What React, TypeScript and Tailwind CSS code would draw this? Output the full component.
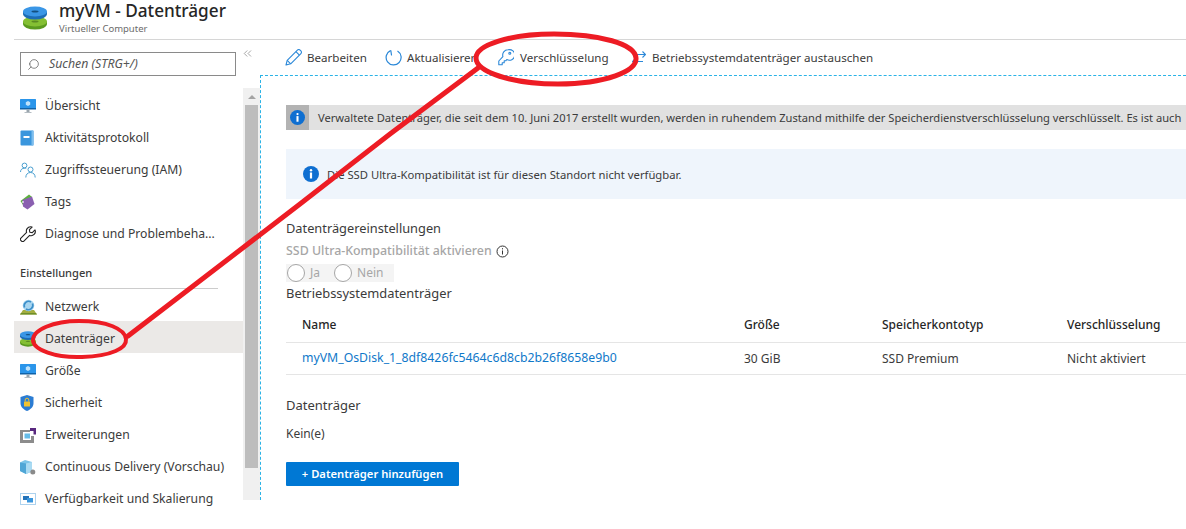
import { ReactNode } from 'react';
import { ChevronsLeft, Search } from 'lucide-react';

function DiskIcon({ size = 24 }: { size?: number }) {
  return (
    <svg width={size} height={size} viewBox="0 0 24 24">
      <ellipse cx="12" cy="18" rx="12" ry="5.500" fill="#5b9a1f" />
      <rect x="0" y="15.500" width="24" height="2.500" fill="#5b9a1f" />
      <ellipse cx="12" cy="15.500" rx="12" ry="5" fill="#84bf33" />
      <ellipse cx="12" cy="15.500" rx="3.500" ry="1" fill="#5b8a22" />
      <ellipse cx="12" cy="8" rx="12" ry="5.500" fill="#1c6cb5" />
      <rect x="0" y="5.500" width="24" height="2.500" fill="#1c6cb5" />
      <ellipse cx="12" cy="5.500" rx="12" ry="5" fill="#3a96e6" />
      <ellipse cx="12" cy="5.500" rx="3.500" ry="1" fill="#134f80" />
    </svg>
  );
}

function MonitorIcon() {
  return (
    <svg width="16" height="16" viewBox="0 0 16 16">
      <rect x="0" y="1" width="16" height="10" rx="0.500" fill="#2a95ea" />
      <rect x="0" y="10" width="16" height="1.500" fill="#1163a8" />
      <path d="M8 3l2.200 1.300v2.400L8 8 5.800 6.700V4.300z" fill="#bfe3fb" />
      <rect x="6.500" y="11.500" width="3" height="2.500" fill="#9aa5ad" />
      <rect x="4.500" y="14" width="7" height="1" fill="#b5bdc3" />
    </svg>
  );
}

function LogIcon() {
  return (
    <svg width="14" height="16" viewBox="0 0 14 16">
      <rect x="0.500" y="0.500" width="13" height="15" rx="1" fill="#3a96dd" />
      <rect x="11.500" y="0.500" width="2" height="15" fill="#7dbdee" />
      <rect x="3.500" y="6" width="6" height="2" fill="#ffffff" />
    </svg>
  );
}

function PeopleIcon() {
  return (
    <svg width="16" height="16" viewBox="0 0 16 16" fill="none" stroke="#4a9fd0" strokeWidth="1">
      <circle cx="4.500" cy="3.500" r="2.400" />
      <path d="M0.500 10c0-2.400 1.600-3.800 4-3.800 0.700 0 1.200 0.100 1.700 0.300" />
      <circle cx="10.500" cy="7.500" r="2.500" />
      <path d="M5.800 15.500c0-3 1.800-5 4.700-5s4.700 2 4.700 5" />
    </svg>
  );
}

function TagIcon() {
  return (
    <svg width="15" height="16" viewBox="0 0 15 16">
      <path d="M0.500 7L9 0.500 12 3 3 11z" fill="#5db03f" />
      <path d="M2.500 6L12 2.500 14.500 10 7.500 15.500 3 12.500z" fill="#8a5fb0" />
      <circle cx="3" cy="8" r="1" fill="#e6ddef" />
    </svg>
  );
}

function WrenchIcon() {
  return (
    <svg width="16" height="16" viewBox="0 0 16 16" fill="none" stroke="#222222" strokeWidth="1.100" strokeLinejoin="round">
      <path d="M10.500 0.800a4.200 4.200 0 00-3.900 5.600L0.900 12.100a1.700 1.700 0 000 2.400l0.600 0.600a1.700 1.700 0 002.400 0l5.700-5.700a4.200 4.200 0 005.400-5.500L12.300 6.600 9.800 6.200 9.400 3.700 12.100 1.100a4.200 4.200 0 00-1.600-0.300z" />
    </svg>
  );
}

function NetworkIcon() {
  return (
    <svg width="17" height="16" viewBox="0 0 17 16">
      <path d="M0 15.500L3 11h11l3 4.500z" fill="#a3ad3f" />
      <path d="M0 15.500L1 14h15l1 1.500z" fill="#6f8f2a" />
      <circle cx="8.500" cy="6.500" r="5.800" fill="#a9d6f0" />
      <path d="M4.500 8.500a4.500 4.500 0 016.500-5.500M12.500 4.500a4.500 4.500 0 01-6.500 5.500" fill="none" stroke="#3d8fc9" strokeWidth="1.600" />
    </svg>
  );
}

function ShieldIcon() {
  return (
    <svg width="14" height="16" viewBox="0 0 14 16">
      <path d="M7 0l6.500 2v6c0 4-3 6.500-6.500 8C3.500 14.500 0.500 12 0.500 8V2z" fill="#2b7cd3" />
      <rect x="4" y="6.500" width="6" height="5" rx="0.500" fill="#f2c230" />
      <path d="M5.200 6.500V5a1.800 1.800 0 013.600 0v1.500" fill="none" stroke="#f2c230" strokeWidth="1" />
    </svg>
  );
}

function ExtensionIcon() {
  return (
    <svg width="16" height="15" viewBox="0 0 16 15">
      <path d="M0 2h10v2H3v8h8V8h3v7H0z" fill="#8c8c8c" />
      <rect x="4.500" y="5.500" width="5.500" height="5" fill="#66bce8" />
      <path d="M10 0h6v6.500h-2.500V3H10z" fill="#59287f" />
    </svg>
  );
}

function DeliveryIcon() {
  return (
    <svg width="16" height="16" viewBox="0 0 16 16">
      <path d="M0 3.500L5 1l7 2v9.500L6 15 0 12z" fill="#7cc4e8" />
      <path d="M6 4.500L12 3v9.500L6 15z" fill="#a9daf2" />
      <path d="M0 3.500L6 4.500V15L0 12z" fill="#4fa6d6" />
      <circle cx="12.800" cy="13" r="2.500" fill="#8a8a8a" />
    </svg>
  );
}

function ScaleIcon() {
  return (
    <svg width="16" height="12" viewBox="0 0 16 12">
      <rect x="0.500" y="0.500" width="15" height="11" fill="#ffffff" stroke="#5aa5dc" strokeDasharray="1 1" />
      <rect x="3" y="3" width="6" height="4" fill="#2272b9" />
      <rect x="7" y="5" width="6" height="4.500" fill="#3a96dd" />
    </svg>
  );
}

function PencilIcon() {
  return (
    <svg width="17" height="17" viewBox="0 0 17 17" fill="none" stroke="#2b88d8" strokeWidth="1.100" strokeLinejoin="round">
      <path d="M1 16l1.200-4.700L12.400 1.100a1.900 1.900 0 012.700 0l0.800 0.800a1.900 1.900 0 010 2.700L5.700 14.800z" />
      <path d="M2.200 11.300l3.500 3.500M10.900 2.600l3.500 3.500" />
    </svg>
  );
}

function RefreshIcon() {
  return (
    <svg width="17" height="17" viewBox="0 0 17 17" fill="none" stroke="#2b88d8" strokeWidth="1.200">
      <path d="M5.500 1.600a7.500 7.500 0 107 0.400" />
      <path d="M5.800 1.500L6.500 6M9.500 0.500" strokeLinecap="round" />
    </svg>
  );
}

function KeyIcon() {
  return (
    <svg width="16" height="17" viewBox="0 0 16 17" fill="none" stroke="#2b88d8" strokeWidth="1.100" strokeLinejoin="round">
      <path d="M10 0.800a5.300 5.300 0 00-5.100 6.800L0.800 12v3.800h3.400v-2h2v-2h1.600l1-1.300A5.300 5.300 0 1010 0.800z" />
      <circle cx="11.800" cy="4.300" r="1" />
    </svg>
  );
}

function SwapIcon() {
  return (
    <svg width="14" height="14" viewBox="0 0 14 14" fill="none" stroke="#2b88d8" strokeWidth="1.100">
      <path d="M3 3.500h10.500M10.500 0.500l3 3-3 3" />
      <path d="M11 10.500H0.500M3.500 7.500l-3 3 3 3" />
    </svg>
  );
}

function NavItem({ icon, label, active }: { icon: ReactNode; label: string; active?: boolean }) {
  return (
    <div className={`flex h-8 items-center pl-[6px] pt-[4px] ${active ? 'bg-[#ebe9e7]' : ''}`}>
      <div className="flex w-[25px] shrink-0 justify-start">{icon}</div>
      <span className="whitespace-nowrap">{label}</span>
    </div>
  );
}

function ToolButton({ icon, label, gap, className }: { icon: ReactNode; label: string; gap: string; className: string }) {
  return (
    <div className={`flex items-center whitespace-nowrap ${gap} ${className}`}>
      {icon}
      <span>{label}</span>
    </div>
  );
}

function InfoDot({ size }: { size: string }) {
  return (
    <svg className={size} viewBox="0 0 16 16">
      <circle cx="8" cy="8" r="8" fill="#0f6fd1" />
      <circle cx="8" cy="4.300" r="1.200" fill="#ffffff" />
      <rect x="6.900" y="6.500" width="2.200" height="6" fill="#ffffff" />
    </svg>
  );
}

function SmallInfo() {
  return (
    <svg width="13" height="13" viewBox="0 0 13 13" fill="none" stroke="#333333" strokeWidth="1">
      <circle cx="6.500" cy="6.500" r="5.500" />
      <path d="M6.500 5.500v4M6.500 3.200v1.200" />
    </svg>
  );
}

function Radio({ label }: { label: string }) {
  return (
    <div className="flex items-center gap-[5px] text-[#a6a6a6]">
      <div className="h-[18px] w-[18px] rounded-full border border-[#a6a6a6] bg-white" />
      <span>{label}</span>
    </div>
  );
}

export default function App() {
  return (
    <div className="relative h-[529px] w-[1186px] overflow-hidden bg-white font-['Noto_Sans',sans-serif] text-[12px] text-[#3b3b3b]">
      <header className="ml-[14px] flex h-[40px] items-start border-b border-[#d6d6d6]">
        <div className="ml-[9px] mt-[6px]">
          <DiskIcon size={24} />
        </div>
        <div className="ml-[12px]">
          <h1 className="text-[17.200px] leading-[22px] font-medium text-[#262626]">myVM - Datenträger</h1>
          <p className="text-[9.500px] leading-[13px] text-[#6b6b6b]">Virtueller Computer</p>
        </div>
      </header>

      <div className="flex h-[460px]">
        <aside className="relative w-[243px] shrink-0 pl-[14px] text-[12.200px]">
          <div className="ml-[6px] mt-[12px] flex h-[24px] w-[216px] items-center border border-[#8a8a8a] pl-[6px] italic text-[#555555]">
            <Search size={13} strokeWidth={1.300} className="-scale-x-100" />
            <span className="ml-[9px] text-[12.300px]">Suchen (STRG+/)</span>
          </div>
          <ChevronsLeft size={13} strokeWidth={1.200} className="absolute left-[241px] top-[7px] text-[#777777]" />

          <nav className="mt-[12px]">
            <NavItem icon={<MonitorIcon />} label="Übersicht" />
            <NavItem icon={<LogIcon />} label="Aktivitätsprotokoll" />
            <NavItem icon={<PeopleIcon />} label="Zugriffssteuerung (IAM)" />
            <NavItem icon={<TagIcon />} label="Tags" />
            <NavItem icon={<WrenchIcon />} label="Diagnose und Problembeha..." />
            <div className="ml-[6px] mr-[25px] mt-[16px] border-b border-[#cccccc] pb-[6px] text-[11.100px] leading-[18px] font-medium">
              Einstellungen
            </div>
            <NavItem icon={<NetworkIcon />} label="Netzwerk" />
            <NavItem active icon={<DiskIcon size={16} />} label="Datenträger" />
            <NavItem icon={<MonitorIcon />} label="Größe" />
            <NavItem icon={<ShieldIcon />} label="Sicherheit" />
            <NavItem icon={<ExtensionIcon />} label="Erweiterungen" />
            <NavItem icon={<DeliveryIcon />} label="Continuous Delivery (Vorschau)" />
            <NavItem icon={<ScaleIcon />} label="Verfügbarkeit und Skalierung" />
          </nav>
        </aside>

        <div className="mt-[48px] flex h-[412px] w-[17px] shrink-0 flex-col bg-[#f0f0f0] px-[2px]">
          <div className="flex h-[17px] items-center justify-center">
            <div className="h-0 w-0 border-x-[4px] border-b-[4px] border-x-transparent border-b-[#a3a3a3]" />
          </div>
          <div className="h-[363px] bg-[#bdbdbd]" />
        </div>

        <main className="min-w-0 flex-1">
          <div className="flex h-[35px] items-center pt-[1px] text-[11.600px]">
            <ToolButton className="ml-[25px] w-[100px]" gap="gap-[5px]" icon={<PencilIcon />} label="Bearbeiten" />
            <ToolButton className="w-[113px]" gap="gap-[5px]" icon={<RefreshIcon />} label="Aktualisieren" />
            <ToolButton className="w-[134px]" gap="gap-[6px]" icon={<KeyIcon />} label="Verschlüsselung" />
            <ToolButton className="" gap="gap-[6px]" icon={<SwapIcon />} label="Betriebssystemdatenträger austauschen" />
          </div>

          <div className="h-[425px] border-l border-t border-dashed border-[#2bb3e6] pl-[25px] pt-[29px]">
            <div className="flex h-[25px] items-center whitespace-nowrap bg-[#e1e1e1] text-[11.150px]">
              <div className="flex h-full w-[23px] shrink-0 items-center justify-center bg-[#b3b3b3]">
                <InfoDot size="h-[15px] w-[15px]" />
              </div>
              <span className="ml-[9px] mt-[2px]">
                Verwaltete Datenträger, die seit dem 10. Juni 2017 erstellt wurden, werden in ruhendem Zustand mithilfe der Speicherdienstverschlüsselung verschlüsselt. Es ist auch
              </span>
            </div>

            <div className="mt-[19px] flex h-[50px] items-center bg-[#eff5fc] pl-[17px] text-[11.280px]">
              <InfoDot size="h-[16px] w-[16px]" />
              <span className="ml-[8px] mt-[2px]">Die SSD Ultra-Kompatibilität ist für diesen Standort nicht verfügbar.</span>
            </div>

            <h2 className="mt-[20px] text-[12.800px] leading-[18px]">Datenträgereinstellungen</h2>
            <div className="mt-[5px] flex items-center gap-[4px] text-[12.400px] font-medium leading-[18px] text-[#a6a6a6]">
              SSD Ultra-Kompatibilität aktivieren
              <SmallInfo />
            </div>
            <div className="mt-[4px] flex h-[18px] w-[108px] items-center gap-[14px] bg-[#f4f4f4] pl-[1px]">
              <Radio label="Ja" />
              <Radio label="Nein" />
            </div>
            <h2 className="mt-[2px] text-[12.900px] leading-[18px]">Betriebssystemdatenträger</h2>

            <div className="mt-[6px] grid h-[35px] grid-cols-[442px_138px_185px_1fr] items-center border-b border-[#e5e5e5] pl-[16px] font-medium text-[#262626]">
              <span>Name</span>
              <span>Größe</span>
              <span>Speicherkontotyp</span>
              <span>Verschlüsselung</span>
            </div>
            <div className="grid h-[32px] grid-cols-[442px_138px_185px_1fr] items-center border-b border-[#e5e5e5] pl-[16px]">
              <span className="text-[12.270px] text-[#0f78c9]">myVM_OsDisk_1_8df8426fc5464c6d8cb2b26f8658e9b0</span>
              <span>30 GiB</span>
              <span>SSD Premium</span>
              <span>Nicht aktiviert</span>
            </div>

            <h2 className="mt-[21px] text-[13px] leading-[18px]">Datenträger</h2>
            <p className="mt-[11px] leading-[18px]">Kein(e)</p>
            <button className="mt-[19px] h-[24px] w-[173px] rounded-[1px] bg-[#0078d4] text-[11.200px] font-semibold text-white">
              + Datenträger hinzufügen
            </button>
          </div>
        </main>
      </div>

      <svg className="pointer-events-none absolute inset-0" width="1186" height="529" viewBox="0 0 1186 529" fill="none" stroke="#ed1c24" strokeLinecap="round">
        <path d="M128 336L300 204 390 134 478 68" strokeWidth="5" />
        <path d="M126 339c1 9-14 17-44 18-26 1-49-7-49-17 0-10 20-19 46-19 28 0 46 8 47 18z" strokeWidth="4" />
        <path d="M636 58c1 13-30 26-78 26-46 0-82-12-82-26 0-13 34-24 78-24 46 0 81 10 82 24z" strokeWidth="5" />
      </svg>
    </div>
  );
}
